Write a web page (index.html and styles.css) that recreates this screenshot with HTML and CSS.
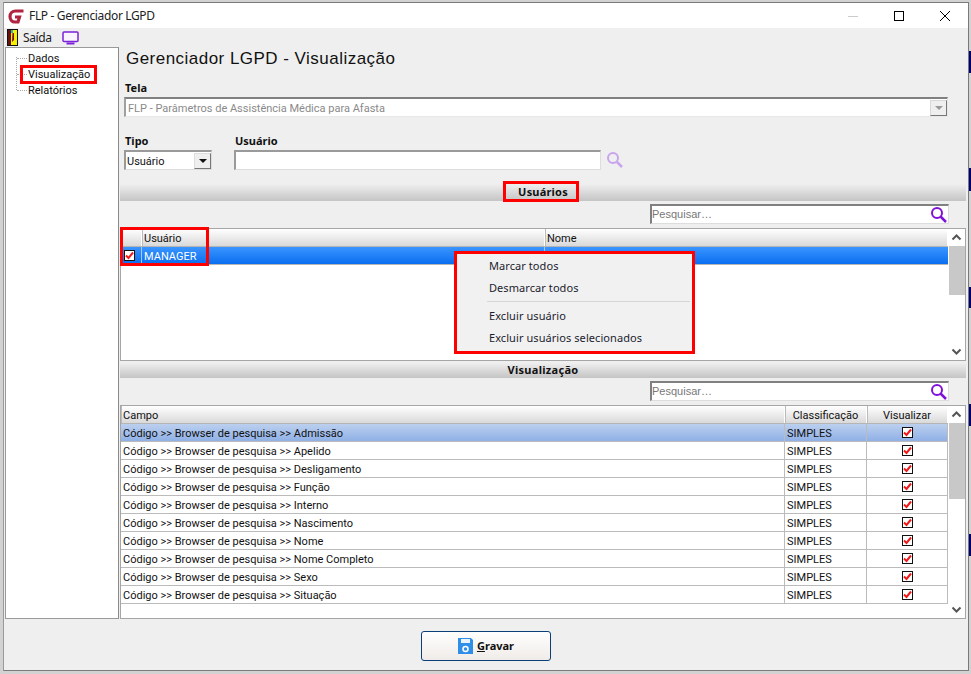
FILE: index.html
```html
<!DOCTYPE html>
<html lang="pt">
<head>
<meta charset="utf-8">
<title>FLP - Gerenciador LGPD</title>
<link rel="stylesheet" href="styles.css">
</head>
<body>
<div class="sliver s1"></div><div class="sliver s2"></div><div class="sliver s3"></div><div class="sliver s4"></div><div class="sliver s5"></div>
<div class="window">
  <header class="titlebar">
    <svg class="logo" width="18" height="16" viewBox="0 0 18 16"><path d="M16.500 3H8.500C5.300 3 3 5.500 3 8.500S5 14 8 14h3l1.500-5H8" fill="none" stroke="#b1233f" stroke-width="3.200"/></svg>
    <span class="title-text">FLP - Gerenciador LGPD</span>
    <span class="winbtns">
      <svg width="12" height="12" viewBox="0 0 12 12"><path d="M1 6.500h10" stroke="#ccc"/></svg>
      <svg width="12" height="12" viewBox="0 0 12 12"><rect x="1.500" y="1.500" width="9" height="9" fill="none" stroke="#000"/></svg>
      <svg width="12" height="12" viewBox="0 0 12 12"><path d="M1 1l10 10M11 1L1 11" stroke="#000" fill="none"/></svg>
    </span>
  </header>
  <nav class="toolbar">
    <svg width="11" height="17" viewBox="0 0 11 17"><rect width="11" height="17" fill="#111"/><rect x="1" y="1" width="3" height="15" fill="#6a0f0f"/><rect x="4" y="1" width="6" height="15" fill="#f7f000"/><path d="M5.500 4h1.500v7L5 13z" fill="#7a1010"/><rect x="4" y="1" width="2" height="3" fill="#21b6c8"/></svg>
    <span class="tool-label">Saída</span>
    <svg class="monitor" width="17" height="14" viewBox="0 0 17 14"><rect x="1" y="1" width="15" height="9.500" rx="1" fill="#f8f5ff" stroke="#7b22d8" stroke-width="1.500"/><path d="M4.500 12.500h8" stroke="#7b22d8" stroke-width="2"/></svg>
  </nav>
  <div class="content">
    <aside class="tree">
      <div class="tree-item">Dados</div>
      <div class="tree-item">Visualização</div>
      <div class="tree-item">Relatórios</div>
      <span class="tree-line"></span>
    </aside>
    <main class="main">
      <h1 class="heading">Gerenciador LGPD - Visualização</h1>
      <div class="label tela-label">Tela</div>
      <div class="combo">
        <span class="combo-text">FLP - Parâmetros de Assistência Médica para Afasta</span>
        <span class="combo-arrow"><i class="tri grey"></i></span>
      </div>
      <div class="filters">
        <div class="filter-tipo">
          <div class="label">Tipo</div>
          <div class="select"><span class="select-text">Usuário</span><span class="select-arrow"><i class="tri"></i></span></div>
        </div>
        <div class="filter-user">
          <div class="label">Usuário</div>
          <div class="user-line">
            <div class="input"></div>
            <svg width="18" height="18" viewBox="0 0 18 18"><circle cx="7" cy="7" r="5" fill="none" stroke="#c9a4ee" stroke-width="2"/><path d="M11 11l5 5" stroke="#c9a4ee" stroke-width="2.500"/></svg>
          </div>
        </div>
      </div>
      <div class="band band-top">Usuários</div>
      <div class="search-row">
        <div class="search"><span>Pesquisar…</span>
          <svg width="17" height="17" viewBox="0 0 17 17"><circle cx="7" cy="7" r="5" fill="none" stroke="#8012d8" stroke-width="2"/><path d="M10.500 10.500l5.500 5.500" stroke="#8012d8" stroke-width="2.500"/></svg>
        </div>
      </div>
      <section class="grid users">
        <div class="grid-body">
          <div class="row head cols-users"><div class="cell"></div><div class="cell">Usuário</div><div class="cell">Nome</div></div>
          <div class="row selected cols-users">
            <div class="cell cb-cell"><span class="check"><svg width="9" height="9" viewBox="0 0 9 9"><path d="M1 4.500l2.500 2.500L8 1.500" fill="none" stroke="#f01818" stroke-width="2"/></svg></span></div>
            <div class="cell">MANAGER</div><div class="cell"></div>
          </div>
        </div>
        <div class="scrollbar">
          <svg class="chev" width="17" height="17" viewBox="0 0 17 17"><path d="M4.500 10.500l4-4 4 4" fill="none" stroke="#555" stroke-width="2"/></svg>
          <span class="thumb thumb-users"></span>
          <svg class="chev down" width="17" height="17" viewBox="0 0 17 17"><path d="M4.500 6.500l4 4 4-4" fill="none" stroke="#555" stroke-width="2"/></svg>
        </div>
      </section>
      <div class="band band-vis">Visualização</div>
      <div class="search-row search-row-vis">
        <div class="search"><span>Pesquisar…</span>
          <svg width="17" height="17" viewBox="0 0 17 17"><circle cx="7" cy="7" r="5" fill="none" stroke="#8012d8" stroke-width="2"/><path d="M10.500 10.500l5.500 5.500" stroke="#8012d8" stroke-width="2.500"/></svg>
        </div>
      </div>
      <section class="grid fields">
        <div class="grid-body">
          <div class="row head cols-fields"><div class="cell">Campo</div><div class="cell center">Classificação</div><div class="cell center">Visualizar</div></div>
          <div class="row data current cols-fields"><div class="cell">Código &gt;&gt; Browser de pesquisa &gt;&gt; Admissão</div><div class="cell">SIMPLES</div><div class="cell center"><span class="check"><svg width="9" height="9" viewBox="0 0 9 9"><path d="M1 4.500l2.500 2.500L8 1.500" fill="none" stroke="#f01818" stroke-width="2"/></svg></span></div></div>
          <div class="row data cols-fields"><div class="cell">Código &gt;&gt; Browser de pesquisa &gt;&gt; Apelido</div><div class="cell">SIMPLES</div><div class="cell center"><span class="check"><svg width="9" height="9" viewBox="0 0 9 9"><path d="M1 4.500l2.500 2.500L8 1.500" fill="none" stroke="#f01818" stroke-width="2"/></svg></span></div></div>
          <div class="row data cols-fields"><div class="cell">Código &gt;&gt; Browser de pesquisa &gt;&gt; Desligamento</div><div class="cell">SIMPLES</div><div class="cell center"><span class="check"><svg width="9" height="9" viewBox="0 0 9 9"><path d="M1 4.500l2.500 2.500L8 1.500" fill="none" stroke="#f01818" stroke-width="2"/></svg></span></div></div>
          <div class="row data cols-fields"><div class="cell">Código &gt;&gt; Browser de pesquisa &gt;&gt; Função</div><div class="cell">SIMPLES</div><div class="cell center"><span class="check"><svg width="9" height="9" viewBox="0 0 9 9"><path d="M1 4.500l2.500 2.500L8 1.500" fill="none" stroke="#f01818" stroke-width="2"/></svg></span></div></div>
          <div class="row data cols-fields"><div class="cell">Código &gt;&gt; Browser de pesquisa &gt;&gt; Interno</div><div class="cell">SIMPLES</div><div class="cell center"><span class="check"><svg width="9" height="9" viewBox="0 0 9 9"><path d="M1 4.500l2.500 2.500L8 1.500" fill="none" stroke="#f01818" stroke-width="2"/></svg></span></div></div>
          <div class="row data cols-fields"><div class="cell">Código &gt;&gt; Browser de pesquisa &gt;&gt; Nascimento</div><div class="cell">SIMPLES</div><div class="cell center"><span class="check"><svg width="9" height="9" viewBox="0 0 9 9"><path d="M1 4.500l2.500 2.500L8 1.500" fill="none" stroke="#f01818" stroke-width="2"/></svg></span></div></div>
          <div class="row data cols-fields"><div class="cell">Código &gt;&gt; Browser de pesquisa &gt;&gt; Nome</div><div class="cell">SIMPLES</div><div class="cell center"><span class="check"><svg width="9" height="9" viewBox="0 0 9 9"><path d="M1 4.500l2.500 2.500L8 1.500" fill="none" stroke="#f01818" stroke-width="2"/></svg></span></div></div>
          <div class="row data cols-fields"><div class="cell">Código &gt;&gt; Browser de pesquisa &gt;&gt; Nome Completo</div><div class="cell">SIMPLES</div><div class="cell center"><span class="check"><svg width="9" height="9" viewBox="0 0 9 9"><path d="M1 4.500l2.500 2.500L8 1.500" fill="none" stroke="#f01818" stroke-width="2"/></svg></span></div></div>
          <div class="row data cols-fields"><div class="cell">Código &gt;&gt; Browser de pesquisa &gt;&gt; Sexo</div><div class="cell">SIMPLES</div><div class="cell center"><span class="check"><svg width="9" height="9" viewBox="0 0 9 9"><path d="M1 4.500l2.500 2.500L8 1.500" fill="none" stroke="#f01818" stroke-width="2"/></svg></span></div></div>
          <div class="row data cols-fields"><div class="cell">Código &gt;&gt; Browser de pesquisa &gt;&gt; Situação</div><div class="cell">SIMPLES</div><div class="cell center"><span class="check"><svg width="9" height="9" viewBox="0 0 9 9"><path d="M1 4.500l2.500 2.500L8 1.500" fill="none" stroke="#f01818" stroke-width="2"/></svg></span></div></div>
        </div>
        <div class="scrollbar">
          <svg class="chev" width="17" height="17" viewBox="0 0 17 17"><path d="M4.500 10.500l4-4 4 4" fill="none" stroke="#555" stroke-width="2"/></svg>
          <span class="thumb thumb-fields"></span>
          <svg class="chev down" width="17" height="17" viewBox="0 0 17 17"><path d="M4.500 6.500l4 4 4-4" fill="none" stroke="#555" stroke-width="2"/></svg>
        </div>
      </section>
    </main>
  </div>
  <footer class="footer">
    <button class="save" type="button">
      <svg width="15" height="16" viewBox="0 0 15 16"><path d="M0 0h13l2 2v14H0z" fill="#2f8fe8"/><rect x="3" y="1" width="9" height="4" fill="#e8f2fb"/><circle cx="7.500" cy="11" r="2.500" fill="none" stroke="#fff" stroke-width="1.500"/></svg>
      <span class="save-text"><u>G</u>ravar</span>
    </button>
  </footer>
</div>
<div class="mark mark-vis"></div>
<div class="mark mark-users"></div>
<div class="mark mark-manager"></div>
<div class="menu">
  <div class="menu-item">Marcar todos</div>
  <div class="menu-item">Desmarcar todos</div>
  <div class="menu-sep"></div>
  <div class="menu-item">Excluir usuário</div>
  <div class="menu-item">Excluir usuários selecionados</div>
</div>
</body>
</html>
```
FILE: styles.css
```css
* { box-sizing: border-box; }
html, body { margin: 0; height: 100%; }
body {
  width: 971px; height: 674px; overflow: hidden; position: relative;
  background: #d2d2d2;
  font: 11px Roboto, "Liberation Sans", Arial, sans-serif; color: #111;
}
.sliver { position: absolute; right: 0; width: 3px; background: #00006e; }
.s1 { top: 51px; height: 22px; }
.s2 { top: 168px; height: 23px; }
.s3 { top: 287px; height: 21px; }
.s4 { top: 404px; height: 22px; }
.s5 { top: 534px; height: 22px; }
.window {
  position: absolute; left: 3px; top: 2px; width: 966px; height: 669px;
  background: #efefef; border: 1px solid #7a7a7a; border-left-color: #9a9a9a;
  display: flex; flex-direction: column;
}
.titlebar { height: 25px; background: #fff; display: flex; align-items: center; padding-left: 3px; flex: none; }
.title-text { margin-left: 4px; font: 12px "Noto Sans", sans-serif; letter-spacing: -.35px; color: #222; }
.winbtns { margin-left: auto; display: flex; gap: 34px; padding-right: 17px; }
.toolbar { height: 19px; display: flex; align-items: center; padding-left: 3px; flex: none; }
.tool-label { margin-left: 5px; font: 12px "Noto Sans", sans-serif; letter-spacing: -.4px; color: #222; }
.monitor { margin-left: 10px; }
.content { flex: none; height: 572px; display: flex; padding-left: 1px; }
.tree {
  width: 114px; height: 572px; background: #fff; border: 1px solid #9a9a9a; border-right-color: #8a8a8a;
  padding: 3px 0 0 22px; position: relative; flex: none;
}
.tree-item { height: 16px; line-height: 16px; position: relative; }
.tree-item::before { content: ""; position: absolute; left: -11px; top: 7px; width: 10px; border-top: 1px dotted #aaa; }
.tree-line { position: absolute; left: 10px; top: 9px; height: 33px; border-left: 1px dotted #aaa; }
.main { flex: 1; min-width: 0; padding-left: 1px; display: flex; flex-direction: column; }
.heading { margin: 0; height: 35px; flex: none; padding: 2px 0 0 6px; font: 400 17px/20px "Liberation Sans", sans-serif; letter-spacing: .47px; color: #111; }
.label { font: 700 11px/12px "Noto Sans", sans-serif; color: #111; }
.tela-label { margin-left: 5px; height: 15px; flex: none; }
.combo {
  margin-left: 4px; width: 824px; height: 20px; background: #fff; flex: none;
  border: 1px solid #e8e8e8; border-top: 2px solid #808080; border-left: 2px solid #a0a0a0;
  display: flex; align-items: center; color: #8a8a8a;
}
.combo-text { padding: 2px 0 0 2px; }
.combo-arrow {
  margin-left: auto; width: 17px; height: 16px; background: #efefef;
  border: 1px solid #d8d8d8; border-right-color: #777; border-bottom-color: #777;
  display: flex; align-items: center; justify-content: center;
}
.tri { width: 0; height: 0; border: 4px solid transparent; border-top: 4px solid #111; border-bottom: 0; display: block; }
.tri.grey { border-top-color: #999; }
.filters { display: flex; margin: 18px 0 0 4px; gap: 22px; height: 35px; flex: none; }
.filter-tipo { width: 88px; }
.filter-tipo .label, .filter-user .label { height: 15px; padding-left: 1px; }
.select {
  width: 88px; height: 20px; background: #fff; border: 2px solid #9a9a9a; border-right: 1px solid #ddd; border-bottom: 1px solid #ddd;
  display: flex; align-items: center; padding-left: 1px;
}
.select-text { padding-top: 2px; }
.select-arrow {
  margin-left: auto; width: 17px; height: 16px; background: #efefef; border: 1px solid #ddd;
  border-right-color: #777; border-bottom-color: #777; display: flex; align-items: center; justify-content: center;
}
.user-line { display: flex; align-items: center; gap: 5px; }
.input { width: 367px; height: 20px; background: #fff; border: 2px solid #9a9a9a; border-right: 1px solid #ddd; border-bottom: 1px solid #ddd; }
.band {
  flex: none; text-align: center; font: 700 11px "Noto Sans", sans-serif; color: #111;
  background: linear-gradient(#efefef 10%, #c4c4c4); width: 846px;
}
.band-top { height: 19px; line-height: 20px; margin-top: 12px; letter-spacing: .2px; }
.band-vis { height: 17px; line-height: 17px; letter-spacing: .3px; }
.search-row { height: 27px; flex: none; padding: 3px 0 0 530px; }
.search-row-vis { padding-top: 3px; }
.search {
  width: 299px; height: 20px; background: #fff; border: 2px solid #808080; border-right: 1px solid #ddd; border-bottom: 1px solid #ddd;
  display: flex; align-items: center; color: #777; line-height: 14px;
  font-family: "Liberation Sans", sans-serif; padding-bottom: 1px;
}
.search svg { margin-left: auto; margin-right: 1px; }
.grid {
  width: 846px; background: #fff; border: 1px solid #a6a6a6; display: flex; flex: none;
}
.users { height: 133px; }
.fields { height: 214px; }
.grid-body { width: 827px; flex: none; }
.row { display: grid; }
.cols-users { grid-template-columns: 21px 403px 403px; }
.cols-fields { grid-template-columns: 664px 82px 81px; }
.cell { padding: 2px 0 0 2px; white-space: nowrap; overflow: hidden; line-height: 15px; border-right: 1px solid #bbb; }
.center { text-align: center; padding-left: 0; }
.head { height: 18px; background: linear-gradient(#fff, #d9d9d9); border-bottom: 1px solid #b5b5b5; }
.head .cell { border-right: 1px solid #fff; box-shadow: 1px 0 0 #bbb inset; padding-left: 2px; }
.head .center { padding-left: 0; }
.selected { height: 18px; background: linear-gradient(#3a95ff, #0a6ef0); color: #fff; border-bottom: 1px solid #b5b5b5; }
.selected .cell { padding-left: 2px; border-right: 1px solid #a7c8f0; }
.selected .cell:last-child { border-right: 0; }
.selected .cb-cell { padding: 0 0 0 3px; }
.cb-cell { display: flex; align-items: center; }
.data { height: 18px; border-bottom: 1px solid #bbb; background: #fff; }
.current { background: linear-gradient(#bcd0ef, #8fb0e6); }
.check {
  display: inline-flex; width: 11px; height: 11px; border: 1px solid #111; background: #fff; align-items: center; justify-content: center; vertical-align: 0;
}
.scrollbar { flex: 1; display: flex; flex-direction: column; background: #fff; align-items: center; }
.chev { flex: none; display: block; }
.down { margin-top: auto; }
.thumb { background: #c8c8c8; display: block; width: 16px; flex: none; }
.thumb-users { height: 49px; }
.thumb-fields { height: 76px; }
.footer { flex: 1; display: flex; justify-content: center; align-items: flex-start; padding: 12px 0 0; }
.save {
  width: 130px; height: 30px; border: 1px solid #0a3f78; border-radius: 3px;
  background: linear-gradient(#fff, #efebe8); display: flex; align-items: center; justify-content: center; gap: 4px;
  font: 700 11px/14px "Noto Sans", sans-serif; color: #111; padding: 0;
}
.mark { position: absolute; border: 3px solid #f00; pointer-events: none; }
.mark-vis { left: 20px; top: 65px; width: 77px; height: 19px; }
.mark-users { left: 503px; top: 181px; width: 76px; height: 21px; }
.mark-manager { left: 120px; top: 227px; width: 89px; height: 39px; }
.menu {
  position: absolute; left: 454px; top: 251px; width: 241px; height: 103px;
  background: #f1f1f1; border: 3px solid #f00; padding: 1px 0 0 32px;
  font: 11px "Noto Sans", sans-serif; letter-spacing: .07px;
}
.menu-item { height: 22px; line-height: 22px; color: #1c1c2e; }
.menu-sep { margin: 2px 2px 3px -2px; border-top: 1px solid #d5d5d5; height: 1px; }
```
